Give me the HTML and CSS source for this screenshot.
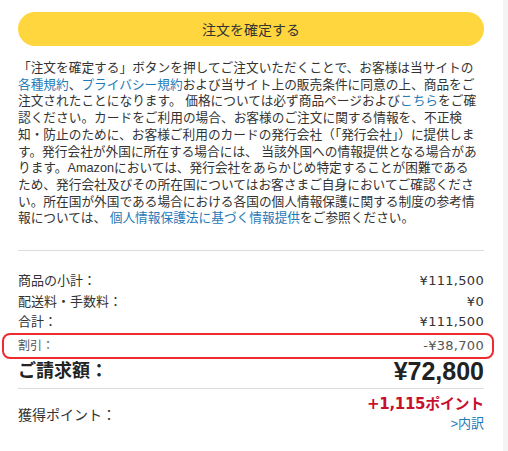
FILE: index.html
```html
<!DOCTYPE html>
<html>
<head>
	<meta charset="utf-8">
	<title>注文の確定</title>
	<link rel="stylesheet" href="styles.css">
</head>
<body>
	<div class="page">
		<button type="button" class="confirm">注文を確定する</button>

		<p class="notice">「注文を確定する」ボタンを押してご注文いただくことで、お客様は当サイトの<a href="#">各種規約</a>、<a href="#">プライバシー規約</a>および当サイト上の販売条件に同意の上、商品をご注文されたことになります。 価格については必ず商品ページおよび<a href="#">こちら</a>をご確認ください。カードをご利用の場合、お客様のご注文に関する情報を、不正検知・防止のために、お客様ご利用のカードの発行会社（「発行会社」）に提供します。発行会社が外国に所在する場合には、 当該外国への情報提供となる場合があります。Amazonにおいては、発行会社をあらかじめ特定することが困難であるため、発行会社及びその所在国についてはお客さまご自身においてご確認ください。所在国が外国である場合における各国の個人情報保護に関する制度の参考情報については、 <a href="#">個人情報保護法に基づく情報提供</a>をご参照ください。</p>

		<hr class="rule">

		<div class="summary">
			<div class="row"><span>商品の小計：</span><span class="amount">¥111,500</span></div>
			<div class="row"><span>配送料・手数料：</span><span class="amount">¥0</span></div>
			<div class="row"><span>合計：</span><span class="amount">¥111,500</span></div>
			<div class="row discount"><span>割引：</span><span class="amount">-¥38,700</span></div>
			<div class="row total"><span class="total-label">ご請求額：</span><span class="total-value">¥72,800</span></div>
		</div>

		<hr class="rule rule-tight">

		<div class="points">
			<span class="points-label">獲得ポイント：</span>
			<div class="points-side">
				<span class="points-value">+1,115ポイント</span>
				<a href="#" class="breakdown">&gt;内訳</a>
			</div>
		</div>
	</div>
	<div class="strip"></div>
</body>
</html>
```

FILE: styles.css
```css
body {
	margin: 0;
	display: flex;
	min-height: 451px;
	background: #fff;
	font-family: "Liberation Sans", "Noto Sans CJK JP", sans-serif;
	color: #333;
}
.page {
	width: 466px;
	padding: 12px 19px 0 18px;
}
.strip {
	width: 5px;
	background: #f4f4f4;
}
.confirm {
	display: block;
	width: 100%;
	height: 34px;
	border: none;
	border-radius: 17px;
	background-color: #ffd63d;
	color: #333;
	font-family: "Noto Sans CJK JP", sans-serif;
	font-size: 14px;
	cursor: pointer;
}
.notice {
	width: 462px;
	margin: 14px 0 0;
	font-size: 12.7px;
	line-height: 16.7px;
	color: #333;
}
.notice a {
	color: #1f7ab8;
	text-decoration: none;
}
.rule {
	border: none;
	border-top: 1px solid #dcdcdc;
	margin: 23px 0 0;
}
.summary {
	margin-top: 20px;
	font-size: 13px;
}
.row {
	display: flex;
	justify-content: space-between;
	line-height: 20.5px;
}
.amount {
	font-family: "DejaVu Sans", "Noto Sans CJK JP", sans-serif;
	font-size: 13px;
	letter-spacing: 0.3px;
}
.discount {
	margin: 0 -10px 0 -16px;
	padding: 0 8px 0 14px;
	border: 2px solid #ee2b2e;
	border-radius: 8px;
	line-height: 22px;
	font-size: 12px;
	color: #555;
}
.total {
	line-height: 24px;
	font-weight: bold;
	align-items: center;
	color: #222;
}
.total-label {
	font-size: 18px;
}
.total-value {
	font-size: 25px;
}
.rule-tight {
	margin-top: 5px;
}
.points {
	display: flex;
	justify-content: space-between;
	align-items: center;
	margin-top: 5px;
	font-size: 14px;
}
.points-side {
	display: flex;
	flex-direction: column;
	align-items: flex-end;
	line-height: 20px;
}
.points-value {
	color: #c8102e;
	font-family: "DejaVu Sans", "Noto Sans CJK JP", sans-serif;
	font-weight: bold;
	font-size: 15px;
	letter-spacing: -0.3px;
}
.breakdown {
	color: #1f7ab8;
	font-size: 13px;
	text-decoration: none;
}
```
